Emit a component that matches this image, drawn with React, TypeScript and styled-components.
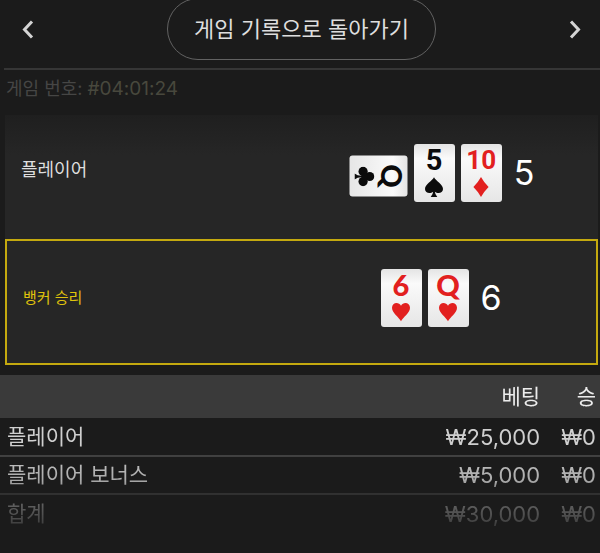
import React from "react";
import styled, { createGlobalStyle, css } from "styled-components";

const GlobalStyle = createGlobalStyle`
  *, *::before, *::after { box-sizing: border-box; }
  body {
    margin: 0;
    background: #1b1b1b;
    color: #dedede;
    font-family: Inter, "Noto Sans CJK KR", sans-serif;
    overflow-x: hidden;
  }
`;

const Header = styled.header`
  display: flex;
  align-items: center;
  justify-content: space-between;
  margin: -2px 0 0 4px;
  padding: 0 12px 8px 11px;
  border-bottom: 2px solid #363636;
`;

const IconButton = styled.button`
  display: flex;
  padding: 0;
  border: 0;
  background: none;
  color: #d4d4d4;
  cursor: pointer;
`;

const BackButton = styled.button`
  height: 62px;
  padding: 0 26px 5px;
  border: 1px solid #626262;
  border-radius: 31px;
  background: none;
  color: #dedede;
  font: inherit;
  font-size: 22px;
  white-space: nowrap;
  cursor: pointer;
`;

const GameNumber = styled.p`
  margin: 0;
  padding: 5px 6px 12px;
  font-size: 18px;
  line-height: 28px;
  color: #464645;
`;

const GameId = styled.span`
  font-size: 19px;
  color: #48483d;
`;

const Hands = styled.main`
  margin: 0 2px 10px 5px;
`;

const Hand = styled.section<{ $winner?: boolean }>`
  display: grid;
  grid-template-columns: 8fr 9fr;
  align-items: center;
  height: 124px;
  padding-bottom: 8px;
  background: linear-gradient(#1f1f1f, #262626 40px);
  ${(p) =>
    p.$winner &&
    css`
      height: 126px;
      border: 2px solid #c4a90f;
      background: #262626;
    `}
`;

const HandLabel = styled.h2<{ $winner?: boolean }>`
  margin: 0;
  padding: 0 16px 6px;
  font-size: 18px;
  line-height: 24px;
  font-weight: 400;
  color: #dedede;
  ${(p) =>
    p.$winner &&
    css`
      padding-bottom: 0;
      font-size: 15px;
      color: #e0c40c;
    `}
`;

const Cards = styled.div`
  display: flex;
  align-items: center;
  justify-content: center;
  gap: 6px;
  padding-left: 2px;
`;

const Score = styled.strong`
  margin-left: 6px;
  font-size: 34px;
  line-height: 40px;
  font-weight: 400;
  color: #fff;
`;

const CardSlot = styled.div<{ $sideways?: boolean }>`
  display: flex;
  align-items: center;
  justify-content: center;
  flex: none;
  width: ${(p) => (p.$sideways ? 58 : 41)}px;
  height: ${(p) => (p.$sideways ? 41 : 58)}px;
  margin-top: ${(p) => (p.$sideways ? 6 : 0)}px;
`;

type Face = "grotesk" | "narrow" | "round";

const rankStyles = {
  grotesk: css`
    font-family: Roboto, sans-serif;
    font-size: 29px;
    font-weight: 700;
  `,
  narrow: css`
    font-family: Roboto, sans-serif;
    font-size: 26px;
    font-weight: 700;
  `,
  round: css`
    font-family: Lato, sans-serif;
    font-size: 29px;
    font-weight: 900;
  `,
};

const CardFace = styled.div<{ $red?: boolean; $sideways?: boolean }>`
  display: flex;
  flex: none;
  flex-direction: column;
  align-items: center;
  width: 41px;
  height: 58px;
  padding-top: 3px;
  border-radius: 3px;
  background: linear-gradient(#e4e4e4, #fafafa 25%, #e6e6e6);
  color: ${(p) => (p.$red ? "#e2201f" : "#0b0b0b")};
  transform: ${(p) => (p.$sideways ? "rotate(90deg)" : "none")};
`;

const Rank = styled.span<{ $face: Face }>`
  ${(p) => rankStyles[p.$face]}
  line-height: 26px;
`;

type Suit = "club" | "spade" | "diamond" | "heart";

const suitShapes: Record<Suit, React.ReactNode> = {
  club: (
    <>
      <circle cx="10" cy="4.8" r="4.6" />
      <circle cx="4.9" cy="11.4" r="4.6" />
      <circle cx="15.1" cy="11.4" r="4.6" />
      <path d="M8 7h4l1.5 6H10.7Q10.8 17.2 13 20H7Q9.2 17.2 9.3 13H6.5Z" />
    </>
  ),
  spade: (
    <path d="M10 .3C12 4 19 7.5 19 12C19 16.3 13.6 17.3 10.9 14.7Q11 17.5 13.3 20H6.7Q9 17.5 9.1 14.7C6.4 17.3 1 16.3 1 12C1 7.5 8 4 10 .3Z" />
  ),
  diamond: <path d="M10 0Q13 5.5 17.6 10Q13 14.5 10 20Q7 14.5 2.4 10Q7 5.5 10 0Z" />,
  heart: <path d="M10 19.3C8 15.3 1 11 1 5.8C1 .3 7.8-.5 10 3.8C12.2-.5 19 .3 19 5.8C19 11 12 15.3 10 19.3Z" />,
};

const SuitIcon = styled.svg`
  width: 20px;
  height: 20px;
  margin-top: 4px;
  fill: currentColor;
`;

const BetTable = styled.table`
  width: 100%;
  border-collapse: collapse;
  font-size: 22px;
  line-height: 28px;
  color: #cfcfcf;
  mask-image: linear-gradient(#000 70px, rgba(0, 0, 0, 0.8) 105px, rgba(0, 0, 0, 0.42) 125px, rgba(0, 0, 0, 0.2) 150px);
`;

const HeadRow = styled.tr`
  height: 43px;
  background: #3a3a3a;
  color: #ececec;
`;

const BodyRow = styled.tr`
  height: 38px;
  & + & {
    border-top: 2px solid #444;
  }
`;

const cellBase = css`
  padding: 0 4px 0 7px;
  font-weight: 400;
  white-space: nowrap;
`;

const HeadCell = styled.th`
  ${cellBase}
  font-size: 21px;
  text-align: right;
`;

const NameCell = styled.th`
  ${cellBase}
  font-size: 21px;
  width: 100%;
  text-align: left;
`;

const AmountCell = styled.td`
  ${cellBase}
  padding-left: 17px;
  text-align: right;
`;

interface CardProps {
  rank: string;
  suit: Suit;
  face: Face;
  sideways?: boolean;
}

function PlayingCard({ rank, suit, face, sideways }: CardProps) {
  return (
    <CardSlot $sideways={sideways}>
      <CardFace $red={suit === "heart" || suit === "diamond"} $sideways={sideways}>
        <Rank $face={face}>{rank}</Rank>
        <SuitIcon viewBox="0 0 20 20" aria-hidden="true">
          {suitShapes[suit]}
        </SuitIcon>
      </CardFace>
    </CardSlot>
  );
}

function Chevron({ direction }: { direction: "left" | "right" }) {
  return (
    <svg width="26" height="26" viewBox="0 0 26 26" fill="none" stroke="currentColor" strokeWidth="3" aria-hidden="true">
      <path d={direction === "left" ? "M17 5.5L9.5 13.5L17 21.5" : "M9 5.5L16.5 13.5L9 21.5"} />
    </svg>
  );
}

const bets = [
  { name: "플레이어", bet: "₩25,000", win: "₩0" },
  { name: "플레이어 보너스", bet: "₩5,000", win: "₩0" },
  { name: "합계", bet: "₩30,000", win: "₩0" },
];

export default function App() {
  return (
    <>
      <GlobalStyle />
      <Header>
        <IconButton type="button" aria-label="이전">
          <Chevron direction="left" />
        </IconButton>
        <BackButton type="button">게임 기록으로 돌아가기</BackButton>
        <IconButton type="button" aria-label="다음">
          <Chevron direction="right" />
        </IconButton>
      </Header>
      <GameNumber>
        게임 번호: <GameId>#04:01:24</GameId>
      </GameNumber>
      <Hands>
        <Hand>
          <HandLabel>플레이어</HandLabel>
          <Cards>
            <PlayingCard rank="Q" suit="club" face="round" sideways />
            <PlayingCard rank="5" suit="spade" face="grotesk" />
            <PlayingCard rank="10" suit="diamond" face="narrow" />
            <Score>5</Score>
          </Cards>
        </Hand>
        <Hand $winner>
          <HandLabel $winner>뱅커 승리</HandLabel>
          <Cards>
            <PlayingCard rank="6" suit="heart" face="round" />
            <PlayingCard rank="Q" suit="heart" face="round" />
            <Score>6</Score>
          </Cards>
        </Hand>
      </Hands>
      <BetTable>
        <thead>
          <HeadRow>
            <HeadCell />
            <HeadCell scope="col">베팅</HeadCell>
            <HeadCell scope="col">승</HeadCell>
          </HeadRow>
        </thead>
        <tbody>
          {bets.map((row) => (
            <BodyRow key={row.name}>
              <NameCell scope="row">{row.name}</NameCell>
              <AmountCell>{row.bet}</AmountCell>
              <AmountCell>{row.win}</AmountCell>
            </BodyRow>
          ))}
        </tbody>
      </BetTable>
    </>
  );
}
